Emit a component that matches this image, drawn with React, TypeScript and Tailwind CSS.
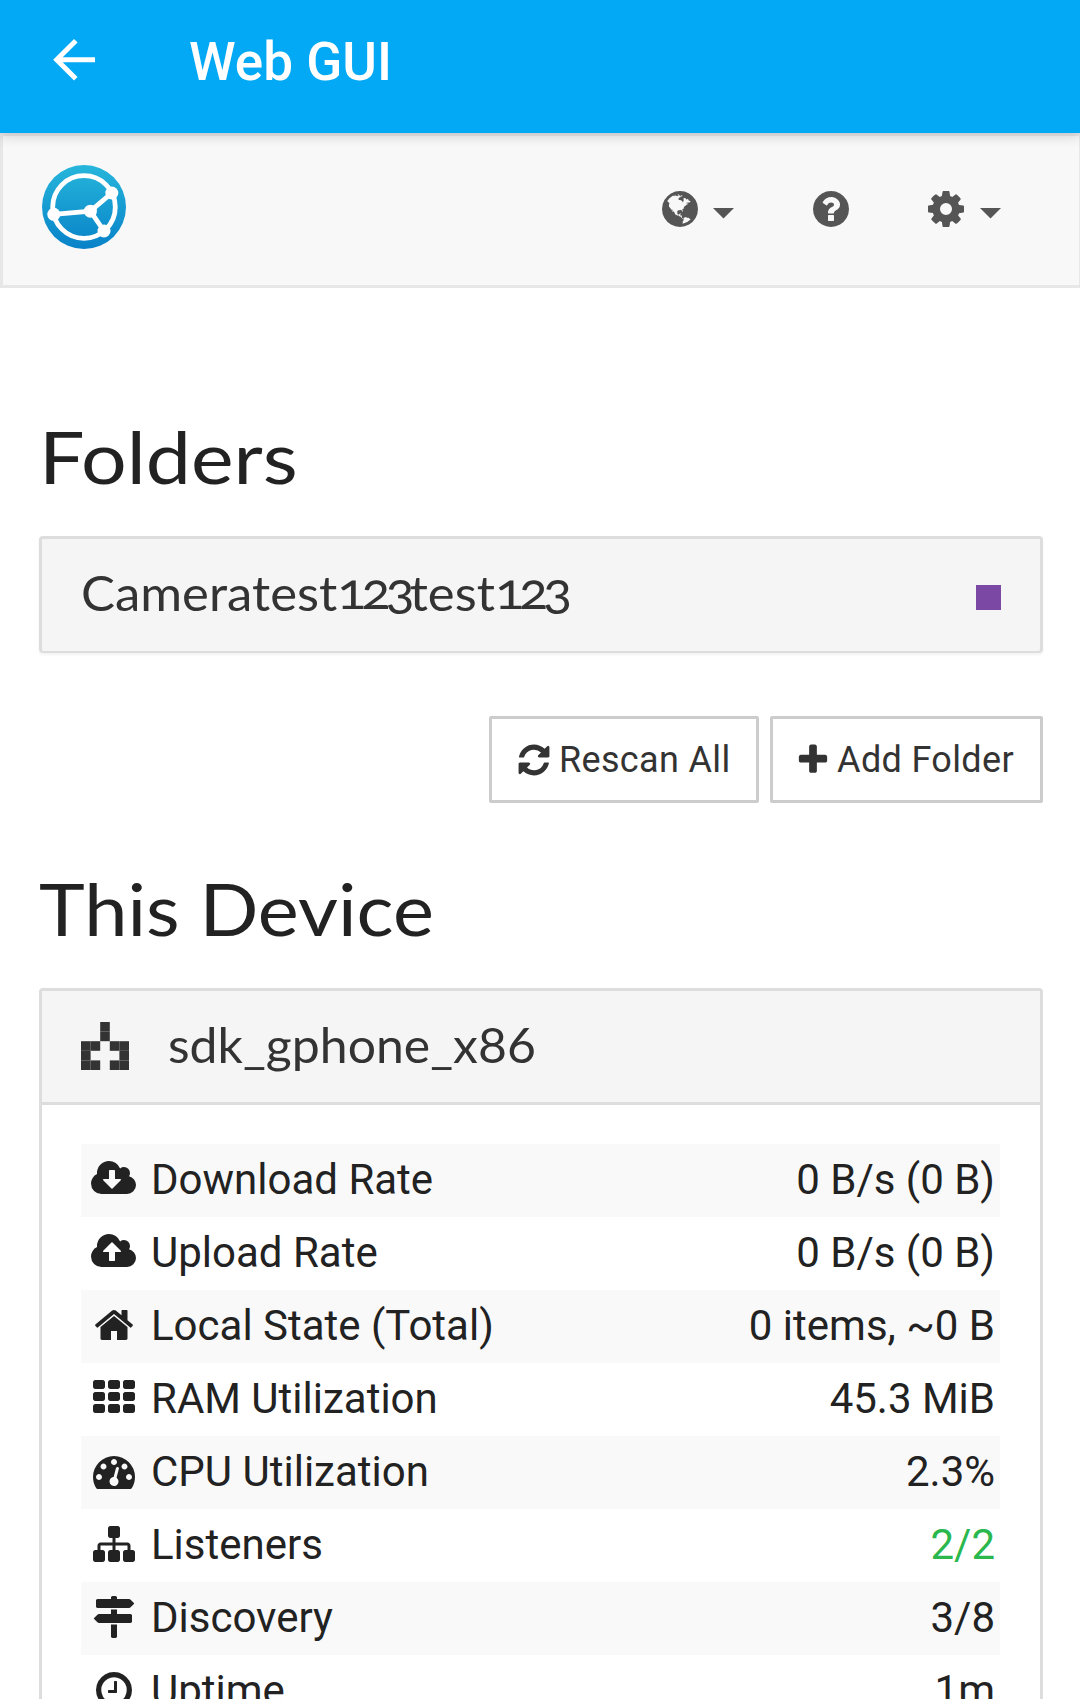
import type { ReactNode } from "react";

const CLOUD =
  "m640 224q0 159-112.5 271.5t-271.5 112.5h-1088q-185 0-316.5-131.5t-131.5-316.5q0-130 70-240t188-165q-2-30-2-43 0-212 150-362t362-150q156 0 285.5 87t188.5 231q71-62 166-62 106 0 181 75t75 181q0 76-41 138 130 31 213.5 135.5t83.5 238.5z";
const DOT = "q0-53-37.5-90.5t-90.5-37.5-90.5 37.5-37.5 90.5 37.5 90.5 90.5 37.5 90.5-37.5 37.5-90.5z";
const DISC =
  "q0 209-103 385.5t-279.5 279.5-385.5 103-385.5-103-279.5-279.5-103-385.5 103-385.5 279.5-279.5 385.5-103 385.5 103 279.5 279.5 103 385.5z";

const PATHS = {
  download:
    "M1280 928q0-14-9-23t-23-9h-224v-352q0-13-9.5-22.5t-22.5-9.5h-192q-13 0-22.5 9.5t-9.5 22.5v352h-224q-13 0-22.5 9.5t-9.5 22.5q0 14 9 23l352 352q9 9 23 9t23-9l351-351q10-12 10-24z" + CLOUD,
  upload:
    "M1280 864q0-14-9-23l-352-352q-9-9-23-9t-23 9l-351 351q-10 12-10 24 0 14 9 23t23 9h224v352q0 13 9.5 22.5t22.5 9.5h192q13 0 22.5-9.5t9.5-22.5v-352h224q13 0 22.5-9.5t9.5-22.5zm0 64" + CLOUD,
  home:
    "M1472 992v480q0 26-19 45t-45 19h-384v-384h-256v384h-384q-26 0-45-19t-19-45v-480q0-1 .5-3t.5-3l575-474 575 474q1 2 1 6zm223-69l-62 74q-8 9-21 11h-3q-13 0-21-7l-692-577-692 577q-12 8-24 7-13-2-21-11l-62-74q-8-10-7-23.5t11-21.5l719-599q32-26 76-26t76 26l244 204v-195q0-14 9-23t23-9h192q14 0 23 9t9 23v408l219 182q10 8 11 21.5t-7 23.5z",
  gauge:
    "M384 1152" + DOT + "m192-448" + DOT +
    "m428 481l101-382q6-26-7.5-48.5t-38.5-29.5-48 6.5-30 39.5l-101 382q-60 5-107 43.5t-63 98.5q-20 77 20 146t117 89 146-20 89-117q16-60-6-117t-72-91z" +
    "m660-33" + DOT + "m-640-640" + DOT + "m448 192" + DOT +
    "m320 448q0 261-141 483-19 29-54 29h-1402q-35 0-54-29-141-221-141-483 0-182 71-348t191-286 286-191 348-71 348 71 286 191 191 286 71 348z",
  sitemap:
    "M1792 1248v320q0 40-28 68t-68 28h-320q-40 0-68-28t-28-68v-320q0-40 28-68t68-28h96v-192h-512v192h96q40 0 68 28t28 68v320q0 40-28 68t-68 28h-320q-40 0-68-28t-28-68v-320q0-40 28-68t68-28h96v-192h-512v192h96q40 0 68 28t28 68v320q0 40-28 68t-68 28h-320q-40 0-68-28t-28-68v-320q0-40 28-68t68-28h96v-192q0-52 38-90t90-38h512v-192h-96q-40 0-68-28t-28-68v-320q0-40 28-68t68-28h320q40 0 68 28t28 68v320q0 40-28 68t-68 28h-96v192h512q52 0 90 38t38 90v192h96q40 0 68 28t28 68z",
  signs:
    "M1745 297q10 10 10 23t-10 23l-141 141q-28 28-68 28h-1344q-26 0-45-19t-19-45v-256q0-26 19-45t45-19h576v-64q0-26 19-45t45-19h128q26 0 45 19t19 45v64h512q40 0 68 28zm-977 919h256v512q0 26-19 45t-45 19h-128q-26 0-45-19t-19-45v-512zm832-448q26 0 45 19t19 45v256q0 26-19 45t-45 19h-1344q-40 0-68-28l-141-141q-10-10-10-23t10-23l141-141q28-28 68-28h512v-192h256v192h576z",
  clock:
    "M1024 544v448q0 14-9 23t-23 9h-320q-14 0-23-9t-9-23v-64q0-14 9-23t23-9h224v-352q0-14 9-23t23-9h64q14 0 23 9t9 23zm416 352q0-148-73-273t-198-198-273-73-273 73-198 198-73 273 73 273 198 198 273 73 273-73 198-198 73-273zm224 0" + DISC,
  grid:
    [0, 640, 1280]
      .flatMap((x) =>
        [128, 640, 1152].map(
          (y) =>
            `M${x + 96} ${y}h320q40 0 68 28t28 68v192q0 40-28 68t-68 28h-320q-40 0-68-28t-28-68v-192q0-40 28-68t68-28z`,
        ),
      )
      .join(""),
  question:
    "M1024 1376v-192q0-14-9-23t-23-9h-192q-14 0-23 9t-9 23v192q0 14 9 23t23 9h192q14 0 23-9t9-23zm256-672q0-88-55.5-163t-138.5-116-170-41q-243 0-371 213-15 24 8 42l132 100q7 6 19 6 16 0 25-12 53-68 86-92 34-24 86-24 48 0 85.5 26t37.5 59q0 38-20 61t-68 45q-63 28-115.5 86.5t-52.5 125.5v36q0 14 9 23t23 9h192q14 0 23-9t9-23q0-19 21.5-49.5t54.5-49.5q32-18 49-28.5t46-35 44.5-48 28-60.5 12.5-81zm384 192" + DISC,
  cog:
    "M1152 896q0-106-75-181t-181-75-181 75-75 181 75 181 181 75 181-75 75-181zm512-109v222q0 12-8 23t-20 13l-185 28q-19 54-39 91 35 50 107 138 10 12 10 25t-9 23q-27 37-99 108t-94 71q-12 0-26-9l-138-108q-44 23-91 38-16 136-29 186-7 28-36 28h-222q-14 0-24.5-8.5t-11.5-21.5l-28-184q-49-16-90-37l-141 107q-10 9-25 9-14 0-25-11-126-114-165-168-7-10-7-23 0-12 8-23 15-21 51-66.5t54-70.5q-27-50-41-99l-183-27q-13-2-21-12.5t-8-23.5v-222q0-12 8-23t19-13l186-28q14-46 39-92-40-57-107-138-10-12-10-24 0-10 9-23 26-36 98.5-107.5t94.5-71.5q13 0 26 10l138 107q44-23 91-38 16-136 29-186 7-28 36-28h222q14 0 24.5 8.5t11.5 21.5l28 184q49 16 90 37l142-107q9-9 24-9 13 0 25 10 129 119 165 170 7 8 7 22 0 12-8 23-15 21-51 66.5t-54 70.5q26 50 41 98l183 28q13 2 21 12.5t8 23.5z",
  refresh:
    "M1639 1056q0 5-1 7-64 268-268 434.5t-478 166.5q-146 0-282.5-55t-243.5-157l-129 129q-19 19-45 19t-45-19-19-45v-448q0-26 19-45t45-19h448q26 0 45 19t19 45-19 45l-137 137q71 66 161 102t187 36q134 0 250-65t186-179q11-17 53-117 8-23 30-23h192q13 0 22.5 9.5t9.5 22.5zm25-800v448q0 26-19 45t-45 19h-448q-26 0-45-19t-19-45 19-45l138-138q-148-137-349-137-134 0-250 65t-186 179q-11 17-53 117-8 23-30 23h-199q-13 0-22.5-9.5t-9.5-22.5v-7q65-268 270-434.5t480-166.5q146 0 284 55.5t245 156.5l130-129q19-19 45-19t45 19 19 45z",
  plus:
    "M1600 736v192q0 40-28 68t-68 28h-416v416q0 40-28 68t-68 28h-192q-40 0-68-28t-28-68v-416h-416q-40 0-68-28t-28-68v-192q0-40 28-68t68-28h416v-416q0-40 28-68t68-28h192q40 0 68 28t28 68v416h416q40 0 68 28t28 68z",
  globe:
    "M896 128q209 0 385.5 103t279.5 279.5 103 385.5-103 385.5-279.5 279.5-385.5 103-385.5-103-279.5-279.5-103-385.5 103-385.5 279.5-279.5 385.5-103zm274 521q-2 1-9.5 9.5t-13.5 9.5q2 0 4.5-5t5-11 3.5-7q6-7 22-15 14-6 52-12 34-8 51 11-2-2 9.5-13t14.5-12q3-2 15-4.5t15-7.5l2-22q-12 1-17.5-7t-6.5-21q0 2-6 8 0-7-4.5-8t-11.5 1-9 1q-10-3-15-7.5t-8-16.5-4-15q-2-5-9.5-11t-9.5-10q-1-2-2.5-5.5t-3-6.5-4-5.5-5.5-2.5-7 5-7.5 10-4.5 5q-3-2-6-1.5t-4.5 1-4.5 3-5 3.5q-3 2-8.5 3t-8.5 2q15-5-1-11-10-4-16-3 9-4 7.5-12t-8.5-14h5q-1-4-8.5-8.5t-17.5-8.5-13-6q-8-5-34-9.5t-33-.5q-5 6-4.5 10.5t4 14 3.5 12.5q1 6-5.5 13t-6.5 12q0 7 14 15.5t10 21.5q-3 8-16 16t-16 12q-5 8-1.5 18.5t10.5 16.5q2 2 1.5 4t-3.5 4.5-5.5 4-6.5 3.5l-3 2q-11 5-20.5-6t-13.5-26q-7-25-16-30-23-8-29 1-5-13-41-26-25-9-58-4 6-1 0-15-7-15-19-12 3-6 4-17.5t1-13.5q3-13 12-23 1-1 7-8.5t9.5-13.5.5-6q35 4 50-11 5-5 11.5-17t10.5-17q9-6 14-5.5t14.5 5.5 14.5 5q14 1 15.5-11t-7.5-20q12 1 3-17-4-7-8-9-12-4-27 5-8 4 2 8-1-1-9.5 10.5t-16.5 17.5-16-5q-1-1-5.5-13.5t-9.5-13.5q-8 0-16 15 3-8-11-15t-24-8q19-12-8-27-7-4-20.5-5t-19.5 4q-5 7-5.5 11.5t5 8 10.5 5.5 11.5 4 8.5 3q14 10 8 14-2 1-8.5 3.5t-11.5 4.5-6 4q-3 4 0 14t-2 14q-5-5-9-17.5t-7-16.5q7 9-25 6l-10-1q-4 0-16 2t-20.5 1-13.5-8q-4-8 0-20 1-4 4-2-4-3-11-9.5t-10-8.5q-46 15-94 41 6 1 12-1 5-2 13-6.5t10-5.5q34-14 42-7l5-5q14 16 20 25-7-4-30-1-20 6-22 12 7 12 5 18-4-3-11.5-10t-14.5-11-15-5q-16 0-22 1-146 80-235 222 7 7 12 8 4 1 5 9t2.5 11 11.5-3q9 8 3 19 1-1 44 27 19 17 21 21 3 11-10 18-1-2-9-9t-9-4q-3 5 .5 18.5t10.5 12.5q-7 0-9.5 16t-2.5 35.5-1 23.5l2 1q-3 12 5.5 34.5t21.5 19.5q-13 3 20 43 6 8 8 9 3 2 12 7.5t15 10 10 10.5q4 5 10 22.5t14 23.5q-2 6 9.5 20t10.5 23q-1 0-2.5 1t-2.5 1q3 7 15.5 14t15.5 13q1 3 2 10t3 11 8 2q2-20-24-62-15-25-17-29-3-5-5.5-15.5t-4.5-14.5q2 0 6 1.5t8.5 3.5 7.5 4 2 3q-3 7 2 17.5t12 18.5 17 19 12 13q6 6 14 19.5t0 13.5q9 0 20 10t17 20q5 8 8 26t5 24q2 7 8.5 13.5t12.5 9.5l16 8 13 7q5 2 18.5 10.5t21.5 11.5q10 4 16 4t14.5-2.5 13.5-3.5q15-2 29 15t21 21q36 19 55 11-2 1 .5 7.5t8 15.5 9 14.5 5.5 8.5q5 6 18 15t18 15q6-4 7-9-3 8 7 20t18 10q14-3 14-32-31 15-49-18 0-1-2.5-5.5t-4-8.5-2.5-8.5 0-7.5 5-3q9 0 10-3.5t-2-12.5-4-13q-1-8-11-20t-12-15q-5 9-16 8t-16-9q0 1-1.5 5.5t-1.5 6.5q-13 0-15-1 1-3 2.5-17.5t3.5-22.5q1-4 5.5-12t7.5-14.5 4-12.5-4.5-9.5-17.5-2.5q-19 1-26 20-1 3-3 10.5t-5 11.5-9 7q-7 3-24 2t-24-5q-13-8-22.5-29t-9.5-37q0-10 2.5-26.5t3-25-5.5-24.5q3-2 9-9.5t10-10.5q2-1 4.5-1.5t4.5 0 4-1.5 3-6q-1-1-4-3-3-3-4-3 7 3 28.5-1.5t27.5 1.5q15 11 22-2 0-1-2.5-9.5t-.5-13.5q5 27 29 9 3 3 15.5 5t17.5 5q3 2 7 5.5t5.5 4.5 5-.5 8.5-6.5q10 14 12 24 11 40 19 44 7 3 11 2t4.5-9.5 0-14-1.5-12.5l-1-8v-18l-1-8q-15-3-18.5-12t1.5-18.5 15-18.5q1-1 8-3.5t15.5-6.5 12.5-8q21-19 15-35 7 0 11-9-1 0-5-3t-7.5-5-4.5-2q9-5 2-16 5-3 7.5-11t7.5-10q9 12 21 2 7-8 1-16 5-7 20.5-10.5t18.5-9.5q7 2 8-2t1-12 3-12q4-5 15-9t13-5l17-11q3-4 0-4 18 2 31-11 10-11-6-20 3-6-3-9.5t-15-5.5q3-1 11.5-.5t10.5-1.5q15-10-7-16-17-5-43 12zm-163 877q206-36 351-189-3-3-12.5-4.5t-12.5-3.5q-18-7-24-8 1-7-2.5-13t-8-9-12.5-8-11-7q-2-2-7-6t-7-5.5-7.5-4.5-8.5-2-10 1l-3 1q-3 1-5.5 2.5t-5.5 3-4 3 0 2.5q-21-17-36-22-5-1-11-5.5t-10.5-7-10-1.5-11.5 7q-5 5-6 15t-2 13q-7-5 0-17.5t2-18.5q-3-6-10.5-4.5t-12 4.5-11.5 8.5-9 6.5-8.5 5.5-8.5 7.5q-3 4-6 12t-5 11q-2-4-11.5-6.5t-9.5-5.5q2 10 4 35t5 38q7 31-12 48-27 25-29 40-4 22 12 26 0 7-8 20.5t-7 21.5q0 6 2 16z",
};

function Icon({ name, className, wide = false }: { name: keyof typeof PATHS; className: string; wide?: boolean }) {
  return (
    <svg
      viewBox={wide ? "0 0 1920 1792" : "0 0 1792 1792"}
      className={`shrink-0 ${className}`}
      fill="currentColor"
    >
      <path d={PATHS[name]} />
    </svg>
  );
}

function Caret({ className = "" }: { className?: string }) {
  return (
    <svg viewBox="0 0 21 11" className={`mt-[8px] h-[11px] w-[21px] ${className}`} fill="currentColor">
      <path d="M0 0h21L10.5 10.5z" />
    </svg>
  );
}

function Logo() {
  return (
    <svg viewBox="0 0 84 84" className="size-[84px]">
      <defs>
        <linearGradient id="logo" x1="0" y1="0" x2="0" y2="1">
          <stop offset="0" stopColor="#26b6db" />
          <stop offset="1" stopColor="#0882c8" />
        </linearGradient>
      </defs>
      <circle cx="42" cy="42" r="42" fill="url(#logo)" />
      <g fill="none" stroke="#fff" strokeWidth="4.8">
        <circle cx="42" cy="42" r="31.3" />
        <path d="M11.8 49.3L48.4 46.2L69.8 28M48.4 46.2L62 66" />
      </g>
      <g fill="#fff">
        <circle cx="11.8" cy="49.3" r="6.5" />
        <circle cx="48.4" cy="46.2" r="6.5" />
        <circle cx="69.8" cy="28" r="6.5" />
        <circle cx="62" cy="66" r="6.5" />
      </g>
    </svg>
  );
}

const IDENTICON = ["..#..", "..#..", "##.##", "#...#", "##.##"];

function Identicon() {
  return (
    <svg viewBox="0 0 48 48" className="mb-px h-[48px] w-[48px]" fill="#333">
      {IDENTICON.flatMap((row, y) =>
        [...row].map((cell, x) =>
          cell === "#" ? <rect key={`${x}-${y}`} x={x * 9.6} y={y * 9.6} width="9.6" height="9.6" /> : null,
        ),
      )}
    </svg>
  );
}

function Digits({ children }: { children: ReactNode }) {
  return <span className="relative -top-[2px] text-[51px] leading-none tracking-[-4.8px]">{children}</span>;
}

function Button({ children }: { children: ReactNode }) {
  return (
    <button className="flex h-[87px] items-center rounded-[2px] border-[3px] border-[#ccc] bg-white text-[36px] leading-none text-[#333]">
      {children}
    </button>
  );
}

const ROWS: { icon: keyof typeof PATHS; label: string; value: string; good?: boolean }[] = [
  { icon: "download", label: "Download Rate", value: "0 B/s (0 B)" },
  { icon: "upload", label: "Upload Rate", value: "0 B/s (0 B)" },
  { icon: "home", label: "Local State (Total)", value: "0 items, ~0 B" },
  { icon: "grid", label: "RAM Utilization", value: "45.3 MiB" },
  { icon: "gauge", label: "CPU Utilization", value: "2.3%" },
  { icon: "sitemap", label: "Listeners", value: "2/2", good: true },
  { icon: "signs", label: "Discovery", value: "3/8" },
  { icon: "clock", label: "Uptime", value: "1m" },
];

export default function App() {
  return (
    <div className="flex h-[1699px] w-[1080px] flex-col overflow-hidden bg-white font-['Roboto',sans-serif] text-[#222]">
      <header className="z-10 flex h-[133px] shrink-0 items-start bg-[#03a9f4] text-white shadow-[0_3px_12px_rgba(0,0,0,0.16)]">
        <svg viewBox="0 0 42 42" className="mt-[39px] ml-[53px] size-[42px]" fill="none" stroke="currentColor" strokeWidth="5">
          <path d="M42 20.7H4M22.8 1.8L3.7 20.7L22.8 39.8" />
        </svg>
        <h1 className="mt-[30px] ml-[94px] text-[53px] leading-[64px] font-medium">Web GUI</h1>
      </header>

      <nav className="flex h-[155px] w-[1080px] shrink-0 items-start border-[3px] border-r border-[#e7e7e7] bg-[#f8f8f8] text-[#555]">
        <div className="mt-[29px] ml-[39px]">
          <Logo />
        </div>
        <div className="mt-[52px] ml-auto flex items-center pr-[78px]">
          <Icon name="globe" className="size-[42px]" />
          <Caret className="ml-[12px]" />
          <Icon name="question" className="ml-[76px] size-[42px]" />
          <Icon name="cog" className="ml-[73px] size-[42px]" />
          <Caret className="ml-[13px]" />
        </div>
      </nav>

      <main className="flex flex-col pt-[128px] pr-[37px] pl-[39px]">
        <h2 className="h-[80px] origin-left scale-x-[1.12] font-['Lato',sans-serif] text-[72px] leading-[80px]">
          Folders
        </h2>

        <div className="mt-[40px] flex h-[117px] items-center justify-between rounded-[4px] border-[3px] border-b-2 border-[#ddd] bg-[#f5f5f5] pr-[39px] pl-[39px] shadow-[0_2px_3px_rgba(0,0,0,0.05)]">
          <span className="mb-[4px] origin-left scale-x-[1.06] font-['Lato',sans-serif] text-[48px] leading-[58px] text-[#333] oldstyle-nums">
            Cameratest<Digits>123</Digits>test<Digits>123</Digits>
          </span>
          <span className="mt-[4px] h-[25px] w-[25px] bg-[#7b48a4]" />
        </div>

        <div className="mt-[63px] flex justify-end gap-[11px]">
          <Button>
            <Icon name="refresh" className="ml-[24px] size-[36px]" />
            <span className="mr-[25px] ml-[7px] tracking-[0.35px]">Rescan All</span>
          </Button>
          <Button>
            <Icon name="plus" className="ml-[22px] size-[36px]" />
            <span className="mr-[26px] ml-[6.5px] tracking-[0.35px]">Add Folder</span>
          </Button>
        </div>

        <h2 className="mt-[65px] h-[80px] origin-left scale-x-[1.077] font-['Lato',sans-serif] text-[72px] leading-[80px]">
          This Device
        </h2>

        <section className="mt-[40px] h-[760px] rounded-[4px] border-[3px] border-[#ddd]">
          <div className="flex h-[114px] items-center border-b-[3px] border-[#ddd] bg-[#f5f5f5] pl-[39px]">
            <Identicon />
            <span className="mb-[4px] ml-[39px] origin-left scale-x-[1.04] font-['Lato',sans-serif] text-[48px] leading-[58px] text-[#333]">
              sdk_gphone_x86
            </span>
          </div>
          <div className="mt-[39px] mr-[40px] ml-[39px]">
            {ROWS.map((row) => (
              <div key={row.label} className="flex h-[73px] items-center pr-[5px] pb-[2px] pl-[6px] text-[42px] odd:bg-[#f9f9f9]">
                <span className="mb-[2px] flex w-[54px] justify-center">
                  {row.icon === "download" || row.icon === "upload" ? (
                    <Icon name={row.icon} wide className="mr-[2px] h-[42px] w-[45px]" />
                  ) : (
                    <Icon name={row.icon} className="size-[42px]" />
                  )}
                </span>
                <span className="ml-[10px]">{row.label}</span>
                <span className={row.good ? "ml-auto text-[#29b74e]" : "ml-auto"}>{row.value}</span>
              </div>
            ))}
          </div>
        </section>
      </main>
    </div>
  );
}
